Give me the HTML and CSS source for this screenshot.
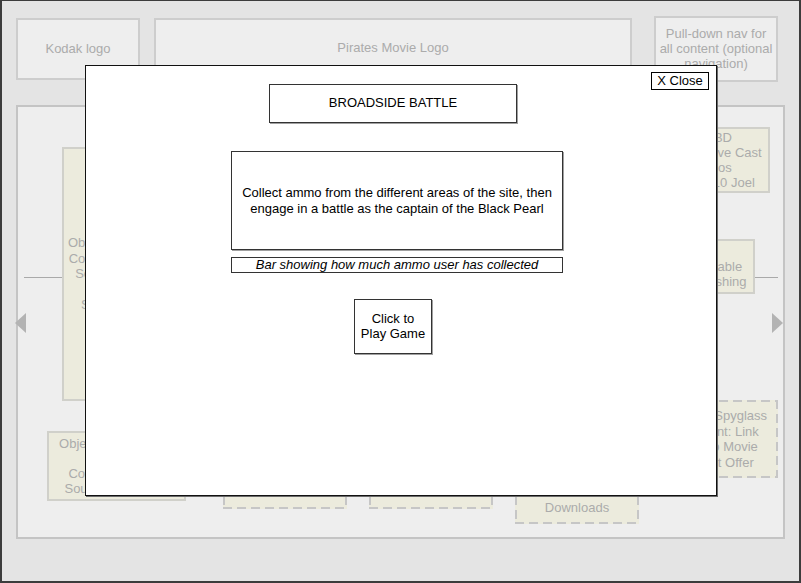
FILE: index.html
```html
<!DOCTYPE html>
<html lang="en">
<head>
  <meta charset="UTF-8" />
  <meta name="viewport" content="width=device-width, initial-scale=1.0"/>
  <title>Broadside Battle - Wireframe</title>
  <link rel="stylesheet" href="styles.css">
</head>
<body>

  <div class="frame">

    <header class="topbar">
      <div class="slot slot-kodak">Kodak logo</div>
      <div class="slot slot-movie">Pirates Movie Logo</div>
      <div class="slot slot-nav">Pull-down nav for<br>all content (optional<br>navigation)</div>
    </header>

    <section class="stage">
      <span class="arrow arrow-left"></span>
      <span class="arrow arrow-right"></span>
      <span class="link link-left"></span>
      <span class="link link-right"></span>

      <div class="node node-game">
        <span>Objective: Find all the</span>
        <span>Compass Challenges</span>
        <span>Solve the riddles to</span>
        <span>&nbsp;</span>
        <span>Sponsors: Kodak</span>
      </div>

      <div class="node node-objective">
        <span>Objectives: Find the</span>
        <span>&nbsp;</span>
        <span>Compass &amp; then</span>
        <span>Sound Bytes Quiz</span>
      </div>

      <div class="node node-cast">
        <span>TBD</span>
        <span>Exclusive Cast</span>
        <span>Bios</span>
        <span>By 1/10 Joel</span>
      </div>

      <div class="node node-print">
        <span>&nbsp;</span>
        <span>Printable</span>
        <span>Publishing</span>
      </div>

      <div class="node dashed node-spyglass">
        <span>Kodak Spyglass</span>
        <span>Content: Link</span>
        <span>Trip to Movie</span>
        <span>Ticket Offer</span>
      </div>

      <div class="bottom-row">
        <div class="node dashed tile">
          <span>Wallpapers</span>
          <span>&amp; Screensavers</span>
        </div>
        <div class="node dashed tile">
          <span>Photo</span>
          <span>Gallery</span>
        </div>
        <div class="node dashed tile tile-tall">
          <span>Retail Mobile</span>
          <span>Downloads</span>
        </div>
      </div>
    </section>

    <!-- game popup sits over the page -->
    <div class="modal">
      <button class="close-btn">X Close</button>
      <div class="modal-title">BROADSIDE BATTLE</div>
      <div class="modal-desc">
        Collect ammo from the different areas of the site, then<br>
        engage in a battle as the captain of the Black Pearl
      </div>
      <div class="ammo-bar">Bar showing how much ammo user has collected</div>
      <button class="play-btn">Click to<br>Play Game</button>
    </div>

  </div>

</body>
</html>
```

FILE: styles.css
```css
html, body {
  margin: 0;
  padding: 0;
  font-family: "Liberation Sans", Arial, sans-serif;
  background: #fff;
}

.frame {
  position: relative;
  box-sizing: border-box;
  width: 801px;
  height: 583px;
  padding: 15px 0 0 14px;
  background: #e4e4e4;
  border: 2px solid #3c3c3c;
  border-top-width: 1px;
  overflow: hidden;
}

/* top row of logo slots */
.topbar {
  display: flex;
  align-items: center;
  height: 66px;
}

.slot {
  box-sizing: border-box;
  display: flex;
  align-items: center;
  justify-content: center;
  text-align: center;
  height: 62px;
  padding-bottom: 2px;
  background: #eeeeee;
  border: 2px solid #cdcdcd;
  color: #ababab;
  font-size: 13px;
  line-height: 15px;
}

.slot-kodak {
  width: 124px;
}

.slot-movie {
  width: 478px;
  margin-left: 14px;
  padding-bottom: 4px;
}

.slot-nav {
  width: 124px;
  height: 66px;
  margin-left: 22px;
}

/* main carousel area */
.stage {
  position: relative;
  box-sizing: border-box;
  width: 769px;
  height: 434px;
  margin-top: 23px;
  background: #eeeeee;
  border: 2px solid #c4c4c4;
}

.arrow {
  position: absolute;
  top: 206px;
  width: 0;
  height: 0;
  border-top: 10px solid transparent;
  border-bottom: 10px solid transparent;
}

.arrow-left {
  left: -3px;
  border-right: 11px solid #b3b3b3;
}

.arrow-right {
  left: 754px;
  border-left: 11px solid #b3b3b3;
}

.link {
  position: absolute;
  top: 170px;
  height: 1px;
  background: #a9a9a9;
}

.link-left {
  left: 6px;
  width: 38px;
}

.link-right {
  left: 736px;
  width: 24px;
}

.node {
  position: absolute;
  box-sizing: border-box;
  display: flex;
  flex-direction: column;
  justify-content: center;
  text-align: center;
  white-space: nowrap;
  background: #ecebdd;
  border: 2px solid #d0d0ca;
  color: #ababab;
  font-size: 13px;
  line-height: 15px;
}

.dashed {
  border: none;
  background:
    repeating-linear-gradient(90deg, #c6c6c6 0 9px, transparent 9px 14px) top left / 100% 2px no-repeat,
    repeating-linear-gradient(90deg, #c6c6c6 0 9px, transparent 9px 14px) bottom left / 100% 2px no-repeat,
    repeating-linear-gradient(180deg, #c6c6c6 0 9px, transparent 9px 14px) top left / 2px 100% no-repeat,
    repeating-linear-gradient(180deg, #c6c6c6 0 9px, transparent 9px 14px) top right / 2px 100% no-repeat,
    #ecebdd;
}

.node-game {
  left: 44px;
  top: 40px;
  width: 137px;
  height: 254px;
  line-height: 15.5px;
}

.node-objective {
  left: 29px;
  top: 324px;
  width: 139px;
  height: 70px;
}

.node-cast {
  left: 650px;
  top: 20px;
  width: 102px;
  height: 66px;
}

.node-print {
  left: 660px;
  top: 132px;
  width: 77px;
  height: 55px;
}

.node-spyglass {
  left: 645px;
  top: 293px;
  width: 115px;
  height: 78px;
  line-height: 15.5px;
}

.bottom-row {
  position: absolute;
  left: 205px;
  top: 333px;
  display: flex;
  align-items: flex-start;
  gap: 22px;
}

.bottom-row .node {
  position: static;
  width: 124px;
  height: 69px;
}

.bottom-row .tile-tall {
  height: 84px;
  justify-content: flex-end;
  padding-bottom: 9px;
}

/* popup */
.modal {
  position: absolute;
  left: 83px;
  top: 64px;
  box-sizing: border-box;
  width: 632px;
  height: 431px;
  padding-top: 18px;
  display: flex;
  flex-direction: column;
  align-items: flex-start;
  background: #fff;
  border: 1px solid #111;
  box-shadow: 1px 1px 0 #6a6a6a;
  color: #000;
  font-size: 13px;
}

.close-btn {
  position: absolute;
  top: 6px;
  right: 7px;
  box-sizing: border-box;
  width: 58px;
  height: 18px;
  margin: 0;
  padding: 0;
  background: #fff;
  border: 1px solid #000;
  font-family: inherit;
  font-size: 13px;
  line-height: 16px;
  color: #000;
}

.modal-title,
.modal-desc,
.ammo-bar,
.play-btn {
  box-sizing: border-box;
  display: flex;
  align-items: center;
  justify-content: center;
  text-align: center;
  border: 1px solid #333;
  box-shadow: 1px 1px 0 #a0a0a0;
}

.modal-title {
  width: 248px;
  height: 39px;
  margin-left: 183px;
  padding-bottom: 2px;
}

.modal-desc {
  width: 332px;
  height: 99px;
  margin-top: 28px;
  margin-left: 145px;
  line-height: 16px;
}

.ammo-bar {
  width: 332px;
  height: 16px;
  margin-top: 7px;
  margin-left: 145px;
  font-style: italic;
  line-height: 14px;
  box-shadow: none;
}

.play-btn {
  width: 78px;
  height: 55px;
  margin: 26px 0 0 268px;
  padding: 0 0 2px;
  background: #fff;
  font-family: inherit;
  font-size: 13px;
  line-height: 15px;
  color: #000;
}
```
